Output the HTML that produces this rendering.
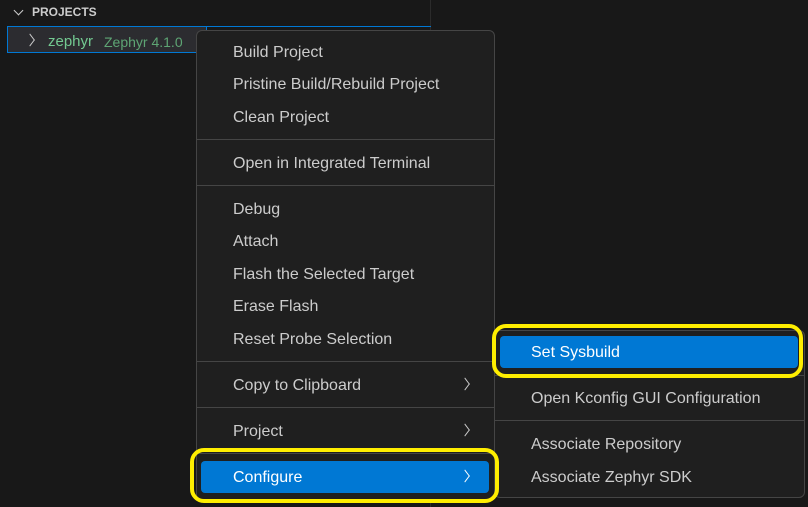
<!DOCTYPE html>
<html><head><style>
*{margin:0;padding:0;box-sizing:border-box}
body{width:808px;height:507px;background:#181818;position:relative;overflow:hidden;font-family:"Liberation Sans",sans-serif;color:#cccccc}
.a{position:absolute}
.t{position:absolute;font-size:16px;line-height:18px;white-space:nowrap;color:#cccccc}
.sep{position:absolute;height:1px;background:#454545}
.chev{position:absolute;width:8px;height:8px;border-right:1.2px solid #cccccc;border-top:1.2px solid #cccccc;transform:rotate(45deg) skew(8deg,8deg)}
</style></head><body>
<div class="a" style="left:430px;top:0;width:1px;height:507px;background:#2b2b2b"></div>
<div class="a" style="left:15px;top:7px;width:7px;height:7px;border-right:1.3px solid #ccc;border-bottom:1.3px solid #ccc;transform:rotate(45deg)"></div>
<div class="a" style="left:32px;top:5px;font-size:12px;font-weight:bold;color:#cccccc">PROJECTS</div>
<div class="a" style="left:7px;top:26px;width:424px;height:1px;background:#0078d4"></div>
<div class="a" style="left:7px;top:27px;width:200px;height:26px;background:#2c2c30;border:1px solid #0078d4;border-top:none"></div>
<div class="chev" style="left:26px;top:36px"></div>
<div class="t" style="left:48px;top:33px;color:#73c991;font-size:15px">zephyr</div>
<div class="t" style="left:104px;top:33px;color:#5ea574;font-size:14px">Zephyr 4.1.0</div>

<div class="a" style="left:196px;top:30px;width:299px;height:471px;background:#1f1f1f;border:1px solid #454545;border-radius:6px"></div>
<div class="t" style="left:233px;top:44px">Build Project</div>
<div class="t" style="left:233px;top:76px">Pristine Build/Rebuild Project</div>
<div class="t" style="left:233px;top:109px">Clean Project</div>
<div class="sep" style="left:197px;top:139px;width:297px"></div>
<div class="t" style="left:233px;top:155px">Open in Integrated Terminal</div>
<div class="sep" style="left:197px;top:185px;width:297px"></div>
<div class="t" style="left:233px;top:201px">Debug</div>
<div class="t" style="left:233px;top:233px">Attach</div>
<div class="t" style="left:233px;top:266px">Flash the Selected Target</div>
<div class="t" style="left:233px;top:298px">Erase Flash</div>
<div class="t" style="left:233px;top:331px">Reset Probe Selection</div>
<div class="sep" style="left:197px;top:361px;width:297px"></div>
<div class="t" style="left:233px;top:377px">Copy to Clipboard</div>
<div class="chev" style="left:461px;top:380px"></div>
<div class="sep" style="left:197px;top:407px;width:297px"></div>
<div class="t" style="left:233px;top:423px">Project</div>
<div class="chev" style="left:461px;top:426px"></div>
<div class="sep" style="left:197px;top:453px;width:297px"></div>
<div class="a" style="left:201px;top:461px;width:288px;height:32px;background:#0078d4;border-radius:4px"></div>
<div class="t" style="left:233px;top:469px;color:#fff">Configure</div>
<div class="chev" style="left:461px;top:472px;border-color:#fff"></div>

<div class="a" style="left:494px;top:330px;width:311px;height:168px;background:#1f1f1f;border:1px solid #454545;border-radius:6px"></div>
<div class="a" style="left:500px;top:336px;width:298px;height:32px;background:#0078d4;border-radius:4px"></div>
<div class="t" style="left:531px;top:344px;color:#fff">Set Sysbuild</div>
<div class="sep" style="left:495px;top:375px;width:309px"></div>
<div class="t" style="left:531px;top:390px">Open Kconfig GUI Configuration</div>
<div class="sep" style="left:495px;top:420px;width:309px"></div>
<div class="t" style="left:531px;top:436px">Associate Repository</div>
<div class="t" style="left:531px;top:469px">Associate Zephyr SDK</div>

<div class="a" style="left:492px;top:324px;width:311px;height:54px;border:4px solid #ffee00;border-radius:14px"></div>
<div class="a" style="left:190px;top:448px;width:309px;height:55px;border:4px solid #ffee00;border-radius:14px"></div>
</body></html>
